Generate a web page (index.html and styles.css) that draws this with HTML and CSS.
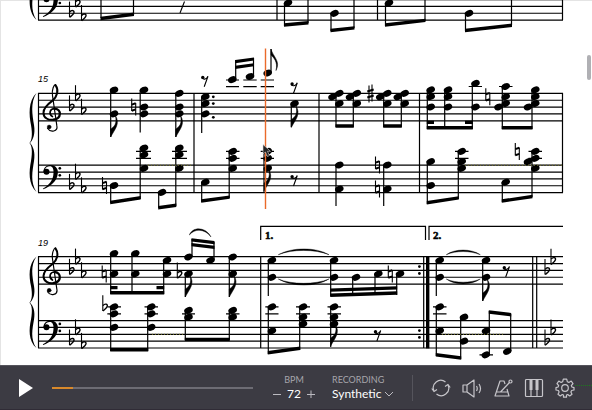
FILE: index.html
```html
<!DOCTYPE html>
<html lang="en">
<head>
<meta charset="utf-8">
<meta name="viewport" content="width=device-width, initial-scale=1">
<title>Score player</title>
<link rel="stylesheet" href="styles.css">
</head>
<body>
<main class="score">
<svg class="sheet" viewBox="0 0 592 365" role="img" aria-label="Piano score, measures 15 to 21">
<defs>
<ellipse id="n" rx="4.400" ry="3.200" transform="rotate(-24)"/>
<path id="fd" d="M0 0V-8C3-10 7-13 4.500-22C10-13 4-8 0 0Z" stroke="#000" stroke-width=".5"/>
<path id="fu" d="M0 0V6C3 9 7 13 5 21.500C10 12 2 8 0 0Z" stroke="#000" stroke-width=".5"/>
<g id="r"><circle cx="-2.200" cy="-3.300" r="1.700"/><path class="thin" d="M-3-2.500C-1-.8 1.500-1.500 3-4.500L-.8 6"/></g>
<g id="nat"><path class="thin" d="M-2-8.500V4M2-4V8.500"/><path class="thick" d="M-2-2.400L2-3.800M-2 3.800L2 2.400"/></g>
<g id="sh"><path class="thin" d="M-1.500-8V9M1.500-9V8"/><path class="thick" d="M-3.200-2L3.200-4M-3.200 4L3.200 2"/></g>
<g id="fl"><path class="thin" d="M0-11.500V4.200"/><path class="bowl" d="M.2-1C2-3.500 5.200-2.800 4.400-.3C4 1.500 1.500 3 .2 4.200"/></g>
<g id="treble" transform="scale(.3333)" fill="none" stroke="#000" stroke-linecap="round">
<path stroke-width="3.500" d="M27 105C36 119 59 115 55 97L42 7C39-13 47-25 51-26"/>
<path stroke-width="6" d="M51-25C62-9 56 10 42 22C22 37 15 46 15 58C15 74 30 82 46 79"/>
<path stroke-width="7" d="M46 79C69 76 70 48 49 46"/>
<path stroke-width="5" d="M49 46C33 46 30 63 42 70"/>
<circle cx="32" cy="101" r="6" fill="#000"/>
</g>
<g id="bass" transform="scale(.3333)">
<path d="M15 22C14 6 26 0 36 0C52 0 60 13 58 25C56 50 35 65 14 73L13 71C32 60 44 47 45 25C46 12 42 4 34 4C26 4 20 9 19 15Z"/>
<circle cx="24" cy="20" r="9"/><circle cx="64" cy="10" r="4"/><circle cx="64" cy="31" r="4"/>
</g>
<g id="keyT"><use href="#fl" x="69.500" y="13.600"/><use href="#fl" x="75.500" y="3.400"/><use href="#fl" x="81.500" y="17"/></g>
<g id="keyB"><use href="#fl" x="69.500" y="20.400"/><use href="#fl" x="75.500" y="10.200"/><use href="#fl" x="81.500" y="23.800"/></g>
<path id="brace" d="M36.500 0C30 10 32.500 22 34 32C35.500 41 33 47 30 50C33 53 35.500 59 34 68C32.500 78 30 89 36.500 99C28 91 29 78 31 68C32.500 58 32 53 29.500 50C32 47 32.500 41 31 32C29 22 28 8 36.500 0Z"/>
<path id="staff" d="M38 0H563M38 6.850H563M38 13.700H563M38 20.550H563M38 27.400H563"/>
</defs>

<!-- closing bars of the system above -->
<g>
<use class="line" href="#staff" y="-7.300"/>
<path class="line" d="M38.500 0V20M277 0V20M377.500 0V20M562.500 0V20"/>
<use href="#brace" y="-79"/>
<g transform="translate(38.500 -7.300)"><use href="#bass"/></g>
<use href="#keyB" y="-7.300"/>
<path class="line" d="M101 0V18M133.500 0V15M284.500 3V26M308 0V23M331 13V31M354 0V28M385.500 3V26M425 0V21M465.500 13V31M511.500 0V25"/>
<path class="thin" d="M184.500 1.500L180 13"/>
<path d="M100.500 16.700L134 12.500V16L100.500 20.200ZM284 23.300L308.500 21V24.400L284 26.800ZM330.500 28.800L354.500 26.200V29.500L330.500 32.200ZM385 23.300L425.500 18.700V22L385 26.800ZM465 28.800L512 23.500V27L465 32.200Z"/>
<use href="#n" x="288" y="3"/><use href="#n" x="334.500" y="13.300"/><use href="#n" x="389" y="3"/><use href="#n" x="469" y="13.300"/>
</g>

<!-- measures 15 to 18 -->
<g>
<text class="bar-number" x="38" y="82">15</text>
<use href="#brace" y="93"/>
<use class="line" href="#staff" y="93.400"/><use class="line" href="#staff" y="165.200"/>
<path class="line" d="M38.500 93V192.500M194 93V192.500M319 93V192.500M419.500 93V192.500M562.500 93V192.500"/>
<g transform="translate(38.500 93.300)"><use href="#treble"/></g>
<g transform="translate(38.500 165)"><use href="#bass"/></g>
<use href="#keyT" y="93.300"/><use href="#keyB" y="165"/>
<path class="line" d="M110.700 90V137M140.200 90V132.500M175.800 93.500V137M110.700 186V203M140.200 148V199M158.700 193V208M175.800 148V206M201.700 97V133M235.700 79V60M253.500 76V58M271 73V49M291.300 104V127M201.700 182V202M229.200 151V198M264 151V192M336 93V127M353.300 93V127M383.700 93V127M401.300 93V127M336 165V206M383.700 165V206M427.300 90V129M444.700 90V129M472.300 83V129M502.300 86V129M532 90V129M427.300 161V204M458.300 151V199M502.300 182V202M532 151V197"/>
<path class="line" d="M136 151.400H151M136 158.300H151M172 151.400H187M172 158.300H187M226 80H239M226 86.700H239M243.300 80H256.700M243.300 86.700H256.700M260.700 80H274M260.700 86.700H274M226 151.400H239.500M226 158.300H239.500M260.700 151.400H274M260.700 158.300H274M468.700 86.500H482M499 86.500H512.500M455 151.400H468.500M455 158.300H468.500M528.500 151.400H542M528.500 158.300H542"/>
<path d="M110.200 200.700L140.700 196V199.500L110.200 204.200ZM158.200 206L176.300 203.600V207L158.200 209.500ZM235.200 60L254 57.400V60.500L235.200 63.200ZM235.200 65.800L254 63.200V66.300L235.200 69ZM201.200 199.300L229.700 195.400V198.800L201.200 202.800ZM335.500 124.200H353.800V127.700H335.500ZM383.200 124.200H401.800V127.700H383.200ZM426.800 126H472.800V129.400H426.800ZM426.800 120.800H434V124H426.800ZM465 120.800H472.800V124H465ZM501.800 126H532.500V129.400H501.800ZM426.800 201L458.800 196.200V199.600L426.800 204.500ZM501.800 199.300L532.500 194.800V198.200L501.800 202.800Z"/>
<use href="#fd" x="110.700" y="137"/><use href="#fd" x="175.800" y="137"/><use href="#fu" x="271" y="49"/><use href="#fd" x="291.300" y="127.500"/><use href="#fd" x="264" y="191"/>
<use href="#n" x="114" y="90"/><use href="#n" x="114" y="113.800"/><use href="#n" x="144" y="90"/><use href="#n" x="144" y="107"/><use href="#n" x="144" y="113.800"/><use href="#n" x="179.300" y="93.400"/><use href="#n" x="179.300" y="107"/><use href="#n" x="179.300" y="113.800"/>
<use href="#n" x="114" y="185.500"/><use href="#n" x="144" y="148"/><use href="#n" x="144" y="154.800"/><use href="#n" x="144" y="168.400"/><use href="#n" x="162" y="192.400"/><use href="#n" x="179.300" y="148"/><use href="#n" x="179.300" y="154.800"/><use href="#n" x="179.300" y="168.400"/>
<use href="#nat" x="133.700" y="107"/><use href="#nat" x="104.500" y="185.500"/>
<use href="#r" x="205" y="80.700"/><use href="#r" x="294.300" y="87.300"/><use href="#r" x="294.300" y="180"/>
<use href="#n" x="205.300" y="96.700"/><use href="#n" x="205.300" y="103.600"/><use href="#n" x="205.300" y="113.900"/>
<circle cx="213.300" cy="96.800" r="1.400"/><circle cx="213.300" cy="103.600" r="1.400"/><circle cx="213.300" cy="117.300" r="1.400"/>
<use href="#n" x="232.300" y="79.700"/><use href="#n" x="250" y="76.500"/><use href="#n" x="267.700" y="73"/><use href="#n" x="294.500" y="103.600"/>
<use href="#n" x="205.300" y="182.200"/><use href="#n" x="232.700" y="151.400"/><use href="#n" x="232.700" y="158.300"/><use href="#n" x="232.700" y="168.400"/><use href="#n" x="267.700" y="151.400"/><use href="#n" x="267.700" y="158.300"/><use href="#n" x="267.700" y="168.400"/>
<use href="#n" x="332.500" y="96.800"/><use href="#n" x="339.300" y="93.300"/><use href="#n" x="339.300" y="103.600"/><use href="#n" x="350" y="96.800"/><use href="#n" x="356.800" y="93.300"/><use href="#n" x="356.800" y="103.600"/>
<use href="#sh" x="370.500" y="93.500"/>
<use href="#n" x="380.200" y="96.800"/><use href="#n" x="387.300" y="93.300"/><use href="#n" x="387.300" y="103.600"/><use href="#n" x="397.800" y="96.800"/><use href="#n" x="404.700" y="93.300"/><use href="#n" x="404.700" y="103.600"/>
<use href="#n" x="339.300" y="165"/><use href="#n" x="339.300" y="189"/><use href="#nat" x="377.500" y="165"/><use href="#nat" x="377.500" y="189"/><use href="#n" x="387.300" y="165"/><use href="#n" x="387.300" y="189"/>
<use href="#n" x="430.700" y="89.800"/><use href="#n" x="430.700" y="96.700"/><use href="#n" x="430.700" y="107"/><use href="#n" x="448" y="89.800"/><use href="#n" x="448" y="96.700"/><use href="#n" x="448" y="107"/><use href="#n" x="475.500" y="83.300"/><use href="#n" x="475.500" y="107"/>
<use href="#nat" x="487.800" y="96.700"/>
<use href="#n" x="505.700" y="86.500"/><use href="#n" x="505.700" y="96.700"/><use href="#n" x="505.700" y="103.500"/><use href="#n" x="498.500" y="107"/><use href="#n" x="535.300" y="89.800"/><use href="#n" x="535.300" y="96.700"/><use href="#n" x="535.300" y="103.500"/><use href="#n" x="528" y="107"/>
<use href="#n" x="430.700" y="161.600"/><use href="#n" x="430.700" y="185.500"/><use href="#n" x="461.700" y="151.400"/><use href="#n" x="461.700" y="161.600"/><use href="#n" x="461.700" y="168.400"/>
<use href="#nat" x="517.300" y="151.500"/><use href="#n" x="505.700" y="182.200"/><use href="#n" x="535.300" y="151.400"/><use href="#n" x="535.300" y="158.300"/><use href="#n" x="528" y="161.600"/><use href="#n" x="535.300" y="168.400"/>
<path class="tint" d="M148 165.200H192M465 165.200H562"/>
</g>

<!-- measures 19 to 21 -->
<g>
<text class="bar-number" x="38" y="246">19</text>
<g transform="translate(0 256.500) scale(1 .925)"><use href="#brace"/></g>
<use class="line" href="#staff" y="256.700"/><use class="line" href="#staff" y="320.600"/>
<path class="line" d="M38.500 256.500V348M260.700 256.500V348M423.700 256.500V348M532.700 256.500V348M536.700 256.500V348"/>
<path d="M426 256.300H429.400V348.400H426Z"/>
<g transform="translate(38.500 256.700)"><use href="#treble"/></g>
<g transform="translate(38.500 320.600)"><use href="#bass"/></g>
<use href="#keyT" y="256.700"/><use href="#keyB" y="320.600"/>
<path class="line" d="M260.700 240V226.400H425.500V240M429 240V226.400H563"/>
<text class="volta" x="265" y="239">1.</text><text class="volta" x="433" y="239">2.</text>
<path class="line" d="M110.700 254V294M132 254V294M163.700 260V294M192 257V239M214 260V242M185.300 274V297M229.300 257V297M110.700 306V351M147.700 306V351M185.300 310V340M229.300 310V340M268.300 260V296M330.700 260V296M352.700 277V295M375 274V295M396.700 274V295M268.300 307V354M299.700 307V350M330.700 307V347M436.300 260V296M482.700 260V301M436.300 307V356M460.700 317V359M489.300 355V311M510.700 351V314"/>
<path class="line" d="M107.300 306.900H121M107.300 313.800H121M144.500 306.900H158M144.500 313.800H158M182 313.800H195M226 313.800H239.500M265.300 306.900H278.500M265.300 313.800H278.500M296 306.900H310M296 313.800H310M327.500 306.900H341M327.500 313.800H341M433 306.900H446.500M433 313.800H446.500M479.500 354.800H493"/>
<path d="M110.200 291H164.200V294.400H110.200ZM110.200 286H117.500V289.200H110.200ZM156.500 286H164.200V289.200H156.500ZM191.500 238.300L214.500 241V244.200L191.500 241.600ZM191.500 243L214.500 245.800V249L191.500 246.300ZM110.200 348H148.200V351.400H110.200ZM184.800 337.700H229.800V341.100H184.800ZM330.200 288.500L397.200 286.300V289.500L330.200 291.700ZM330.200 293.500L397.200 291.300V294.700L330.200 296.900ZM267.800 351L300.200 346.500V350L267.800 354.500ZM435.800 352.900L461.200 356.200V359.700L435.800 356.400ZM488.800 310.300L511.200 313V316.500L488.800 313.800Z"/>
<path d="M189.300 235C193 226 206 227 211 237C205 228.800 195 228 189.300 235ZM278.300 254.700C292 247 316 247 329 254.700C315 249 292 249 278.300 254.700ZM278.300 279C292 287 316 287 329 279C315 284.800 292 284.800 278.300 279ZM446.300 254.700C455 248.500 471 248.500 480.300 254.700C470 250.500 456 250.500 446.300 254.700ZM446.300 279C455 285.500 471 285.500 480.300 279C470 283.300 456 283.300 446.300 279Z" stroke="#000" stroke-width=".4"/>
<use href="#fd" x="185.300" y="297"/><use href="#fd" x="229.300" y="297"/><use href="#fd" x="330.700" y="346"/><use href="#fd" x="482.700" y="301"/>
<use href="#n" x="114" y="253.500"/><use href="#n" x="114" y="273.800"/><use href="#n" x="135.300" y="253.500"/><use href="#n" x="135.300" y="273.800"/><use href="#n" x="167" y="260.300"/><use href="#n" x="167" y="273.800"/><use href="#nat" x="104.200" y="274"/>
<use href="#fl" x="177.300" y="274"/><use href="#n" x="188.500" y="257"/><use href="#n" x="210.500" y="260.300"/><use href="#n" x="188.500" y="273.800"/><use href="#n" x="232.700" y="257"/><use href="#n" x="232.700" y="273.800"/>
<use href="#fl" x="102.800" y="306.700"/><use href="#n" x="114" y="306.900"/><use href="#n" x="114" y="313.800"/><use href="#n" x="114" y="327.400"/><use href="#n" x="151.200" y="306.900"/><use href="#n" x="151.200" y="313.800"/><use href="#n" x="151.200" y="327.400"/>
<use href="#n" x="188.500" y="310.300"/><use href="#n" x="188.500" y="317.200"/><use href="#n" x="232.700" y="310.300"/><use href="#n" x="232.700" y="317.200"/>
<use href="#n" x="271.900" y="260.300"/><use href="#n" x="271.900" y="277.300"/><use href="#n" x="334" y="260.300"/><use href="#n" x="334" y="277.300"/><use href="#n" x="356" y="277.300"/><use href="#n" x="378.300" y="273.800"/><use href="#nat" x="390.300" y="274"/><use href="#n" x="400" y="273.800"/>
<use href="#n" x="271.900" y="306.900"/><use href="#n" x="271.900" y="330.800"/><use href="#n" x="303" y="306.900"/><use href="#n" x="303" y="317.200"/><use href="#n" x="303" y="324"/><use href="#n" x="334" y="306.900"/><use href="#n" x="334" y="317.200"/><use href="#n" x="334" y="324"/><use href="#r" x="377.700" y="335"/>
<circle cx="419.400" cy="266.600" r="1.400"/><circle cx="419.400" cy="273.500" r="1.400"/><circle cx="419.400" cy="330.600" r="1.400"/><circle cx="419.400" cy="337.400" r="1.400"/>
<use href="#n" x="439.700" y="260.300"/><use href="#n" x="439.700" y="277.300"/><use href="#n" x="486" y="260.300"/><use href="#n" x="486" y="277.300"/><use href="#r" x="506.500" y="271"/>
<use href="#n" x="439.700" y="306.900"/><use href="#n" x="439.700" y="330.800"/><use href="#n" x="464" y="317.200"/><use href="#n" x="464" y="341.200"/><use href="#n" x="486" y="330.800"/><use href="#n" x="485.800" y="354.800"/><use href="#n" x="507.300" y="351.400"/>
<use href="#fl" x="545" y="270.400"/><use href="#fl" x="551" y="260.200"/><use href="#fl" x="545" y="341"/><use href="#fl" x="551" y="330.900"/>
<path class="tint" d="M152 334.300H184M442 334.300H505"/>
</g>

<!-- playhead and pointer -->
<path class="playhead" d="M265.500 48.500V209"/>
<path d="M263 144.500V154L265.400 152L267.500 156.500L269.500 155.500L267.500 151.300H270.500Z" fill="#222" stroke="#ddd" stroke-width=".6"/>
</svg>
<div class="scroll-thumb"></div>
</main>

<footer class="player">
<button class="play" type="button" aria-label="Play"><svg viewBox="0 0 16 20"><path d="M1 1L15 10L1 19Z" fill="#fff"/></svg></button>
<input class="progress" type="range" min="0" max="100" value="10" aria-label="Position">
<div class="field tempo">
<label class="caption" for="bpm">BPM</label>
<div class="stepper">
<button type="button" aria-label="Slower"><svg viewBox="0 0 8 8"><path d="M0 4.500H8"/></svg></button>
<input id="bpm" type="text" value="72">
<button type="button" aria-label="Faster"><svg viewBox="0 0 8 8"><path d="M0 4.500H8M4 .5V8.500"/></svg></button>
</div>
</div>
<div class="field recording">
<label class="caption" for="recording">RECORDING</label>
<div class="picker">
<select id="recording"><option>Synthetic</option></select>
<svg class="chevron" viewBox="0 0 10 6"><path d="M1 1L5 5L9 1"/></svg>
</div>
</div>
<div class="tools">
<button type="button" aria-label="Loop"><svg viewBox="0 0 20 20"><path d="M3 13A7.500 7.500 0 0 1 14.500 4M17 7A7.500 7.500 0 0 1 5.500 16"/><path d="M.8 10.500L3 13.500L6 11.500M19.200 9.500L17 6.500L14 8.500"/></svg></button>
<button type="button" aria-label="Volume"><svg viewBox="0 0 20 20"><path d="M1 7H5V14H1ZM5 7L12 2V19L5 14M14.500 8Q16 10.500 14.500 13M17 6Q20 10.500 17 15"/></svg></button>
<button type="button" aria-label="Metronome"><svg viewBox="0 0 20 20"><path d="M12 6L11 3H7L2 18H16L14 11M4 14H15M7.500 14L16.500 4.500"/><circle cx="17.500" cy="3.500" r="1.500"/></svg></button>
<button type="button" aria-label="Keyboard"><svg viewBox="0 0 20 20"><rect x="1.500" y="1.500" width="17" height="17" rx="1"/><path d="M7 12V18M13 12V18"/><path class="keys" d="M5.500 2H8.500V12H5.500ZM11.500 2H14.500V12H11.500Z"/></svg></button>
<button type="button" aria-label="Settings"><svg viewBox="0 0 20 20"><circle cx="10" cy="10" r="3.300"/><path d="M8.300 1.200H11.700L12.300 3.700L13.900 4.400L16.200 3.100L18 5.500L16.300 7.600L16.900 9L19 9.600V12L16.600 12.500L15.900 14L17 16.200L14.700 18L12.700 16.500L11.500 17V19.200H8.500V17L7.300 16.500L5.300 18L3 16.200L4.100 14L3.400 12.500L1 12V9.600L3.100 9L3.700 7.600L2 5.500L3.800 3.100L6.100 4.400L7.700 3.700Z"/></svg></button>
</div>
<span class="signal"></span>
</footer>
</body>
</html>
```
FILE: styles.css
```css
* {
  box-sizing: border-box;
}

body {
  margin: 0;
  height: 100vh;
  display: flex;
  flex-direction: column;
  background: #fff;
  font-family: Lato, "Liberation Sans", sans-serif;
}

.score {
  position: relative;
  flex: 1;
  min-height: 0;
  overflow: hidden;
  box-shadow: inset 1px 1px #e4e4e4;
}

.sheet {
  display: block;
  width: 100%;
}

.line {
  fill: none;
  stroke: #000;
  stroke-width: 1.2;
}

.thin {
  fill: none;
  stroke: #000;
  stroke-width: 1.1;
}

.thick {
  fill: none;
  stroke: #000;
  stroke-width: 2;
}

.bowl {
  fill: none;
  stroke: #000;
  stroke-width: 1.4;
}

.tint {
  fill: none;
  stroke: #77772a;
  stroke-width: 1;
  stroke-dasharray: 1 2;
}

.playhead {
  fill: none;
  stroke: #ea6a2a;
  stroke-width: 1.4;
}

.bar-number {
  font: italic 9px "Liberation Sans", sans-serif;
}

.volta {
  font: bold 11px "Liberation Serif", serif;
  stroke: #000;
  stroke-width: .5;
}

.scroll-thumb {
  position: absolute;
  top: 55px;
  right: 1px;
  width: 4px;
  height: 25px;
  border-radius: 2px;
  background: #b0b0b4;
}

.player {
  display: flex;
  align-items: center;
  height: 45px;
  padding-left: 18px;
  border-top: 1px solid #55545c;
  border-bottom: 1px solid #302c36;
  background: #3c3b43;
  color: #fff;
}

button {
  display: block;
  padding: 0;
  border: 0;
  background: none;
}

button svg {
  display: block;
  width: 100%;
}

.play {
  width: 16px;
  margin-right: 18px;
}

.progress {
  flex: 1;
  min-width: 40px;
  height: 2px;
  margin: 0 20px 0 0;
  appearance: none;
  background: linear-gradient(to right, #d9892b 10.5%, #6d6c74 10.5%);
}

.progress::-webkit-slider-thumb {
  appearance: none;
  width: 0;
  height: 0;
}

.field {
  display: flex;
  flex-direction: column;
  gap: 1px;
}

.caption {
  font-size: 9px;
  line-height: 11px;
  color: #a6a5ab;
}

.tempo {
  width: 42px;
  margin-right: 17px;
  align-items: center;
}

.stepper {
  display: flex;
  align-items: center;
  justify-content: space-between;
  width: 100%;
}

.stepper button {
  width: 8px;
}

.stepper path,
.chevron path {
  fill: none;
  stroke: #bbbac0;
  stroke-width: 1;
}

.stepper input,
.picker select {
  appearance: none;
  height: 16px;
  padding: 0;
  border: 0;
  background: none;
  color: #fff;
  font: 12px/16px Lato, "Liberation Sans", sans-serif;
}

.stepper input {
  width: 16px;
  text-align: center;
}

.picker {
  display: flex;
  align-items: center;
  gap: 2px;
}

.chevron {
  width: 10px;
}

.recording {
  width: 80px;
}

.tools {
  display: flex;
  align-items: center;
  gap: 11px;
  height: 26px;
  padding-left: 18px;
  border-left: 1px solid #55545c;
}

.tools button {
  width: 20px;
}

.tools svg {
  fill: none;
  stroke: #c6c5ca;
  stroke-width: 1.2;
  stroke-linejoin: round;
}

.tools .keys {
  fill: #c6c5ca;
  stroke: none;
}

.signal {
  width: 17px;
  height: 6px;
  border-top: 1px dotted #1d7a1d;
}
```
